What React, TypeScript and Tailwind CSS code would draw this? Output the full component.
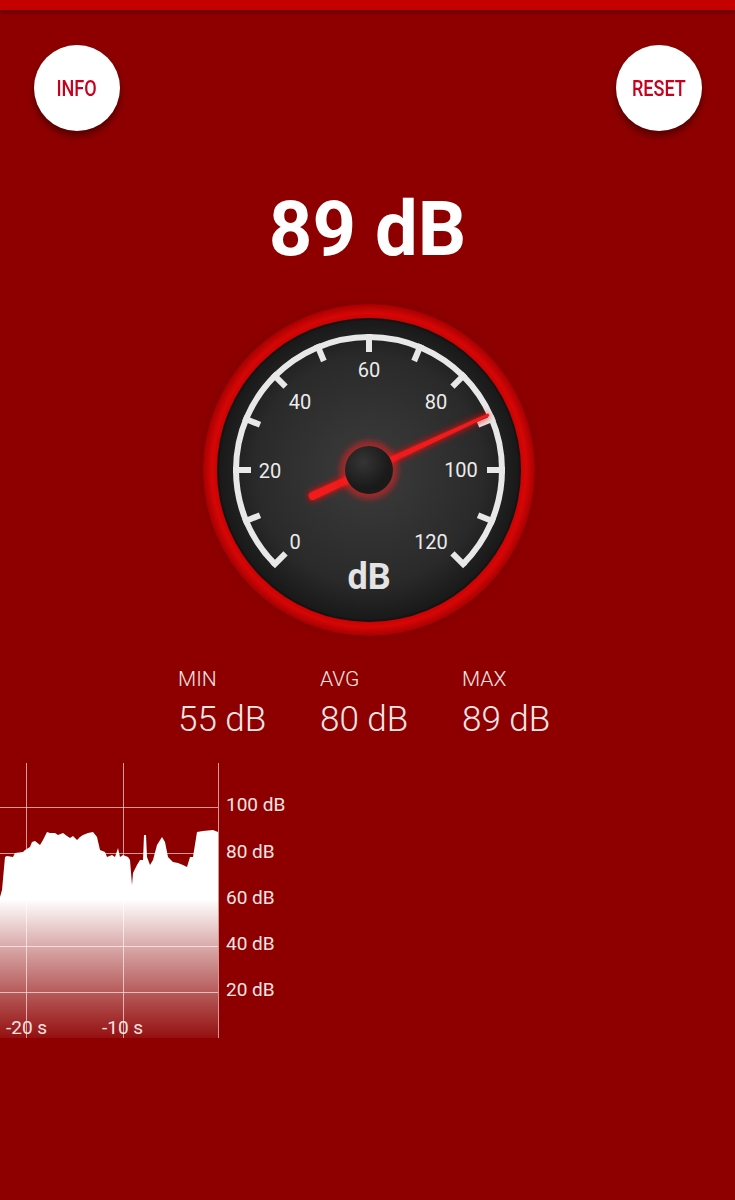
import React from 'react';

const CX = 368;
const CY = 470;

const pt = (deg: number, r: number) => {
    const a = (deg * Math.PI) / 180;
    return { x: CX + r * Math.sin(a), y: CY - r * Math.cos(a) };
};

// label centres, read off the dial
const labels: [number, number, number][] = [
    [0, 294, 542], [20, 269, 471], [40, 299, 402], [60, 368, 370], [80, 435, 402], [100, 460, 470], [120, 430, 542],
];

// chart trace in page coordinates (x, y)
const trace: [number, number][] = [
    [0, 897], [2, 890], [5, 857], [7, 856], [13, 857], [15, 853], [23, 852], [25, 850], [30, 847],
    [32, 842], [35, 841], [40, 845], [43, 840], [47, 832], [50, 833], [55, 833], [58, 835], [63, 833],
    [67, 836], [70, 838], [73, 836], [77, 840], [80, 837], [83, 835], [88, 833], [93, 832], [97, 837],
    [100, 850], [105, 852], [107, 857], [112, 855], [115, 857], [118, 848], [120, 857], [123, 855],
    [128, 857], [130, 860], [132, 885], [133, 873], [137, 865], [140, 860], [143, 860], [144, 835],
    [146, 835], [147, 857], [150, 865], [153, 860], [157, 845], [162, 837], [165, 842], [168, 857],
    [173, 862], [178, 863], [183, 865], [187, 867], [190, 857], [193, 857], [197, 832], [203, 831],
    [213, 830], [218, 832],
];

const RoundButton: React.FC<{ label: string }> = ({ label }) => (
    <button className="flex h-[86px] w-[86px] items-center justify-center rounded-full bg-white shadow-[0_5px_7px_rgba(0,0,0,0.4)]">
        <span className="inline-block scale-x-[0.82] text-[22px] font-medium text-[#c8001e]">{label}</span>
    </button>
);

const Gauge: React.FC<{ value: number }> = ({ value }) => {
    const needle = -135 + value * 2.25;
    const s = pt(-135, 133);
    const e = pt(135, 133);
    return (
        <svg width="340" height="340" viewBox="198 300 340 340" className="block">
            <defs>
                <radialGradient id="face" cx="368" cy="470" r="152" gradientUnits="userSpaceOnUse">
                    <stop offset="0" stopColor="#3c3c3c" />
                    <stop offset="0.75" stopColor="#2a2a2a" />
                    <stop offset="1" stopColor="#181818" />
                </radialGradient>
                <radialGradient id="ring" cx="368" cy="470" r="167" gradientUnits="userSpaceOnUse">
                    <stop offset="0.88" stopColor="#b80000" />
                    <stop offset="0.94" stopColor="#d60606" />
                    <stop offset="1" stopColor="#a00000" />
                </radialGradient>
                <radialGradient id="cap" cx="362" cy="462" r="26" gradientUnits="userSpaceOnUse">
                    <stop offset="0" stopColor="#353535" />
                    <stop offset="1" stopColor="#1a1a1a" />
                </radialGradient>
                <filter id="glow" x="-50%" y="-50%" width="200%" height="200%">
                    <feGaussianBlur stdDeviation="3" />
                </filter>
            </defs>
            <circle cx={CX} cy={CY} r="169" fill="#7a0000" opacity="0.5" filter="url(#glow)" />
            <circle cx={CX} cy={CY} r="166" fill="url(#ring)" />
            <circle cx={CX} cy={CY} r="152" fill="#141414" />
            <circle cx={CX} cy={CY} r="150" fill="url(#face)" />

            <path d={`M ${s.x} ${s.y} A 133 133 0 1 1 ${e.x} ${e.y}`} fill="none" stroke="#e8e8e8" strokeWidth="6" />
            {Array.from({ length: 13 }, (_, i) => {
                const a = -135 + i * 22.5;
                const p1 = pt(a, 136);
                const p2 = pt(a, 118);
                return <line key={i} x1={p1.x} y1={p1.y} x2={p2.x} y2={p2.y} stroke="#e8e8e8" strokeWidth="6" />;
            })}
            {labels.map(([v, x, y]) => (
                <text key={v} x={x} y={y} fill="#ececec" fontSize="20" fontFamily="Roboto, sans-serif" textAnchor="middle" dominantBaseline="central">
                    {v}
                </text>
            ))}
            <text x={CX} y={577} fill="#e4e4e4" fontSize="36" fontWeight="bold" fontFamily="Roboto, sans-serif" textAnchor="middle" dominantBaseline="central">
                dB
            </text>

            <g transform={`rotate(${needle} ${CX} ${CY})`}>
                <path d="M 365.5 338 L 370.5 338 L 373 532 A 5 5 0 0 1 363 532 Z" fill="#ff1010" filter="url(#glow)" opacity="0.8" />
                <path d="M 366.5 338 L 369.5 338 L 372 532 A 4 4 0 0 1 364 532 Z" fill="#f21a1a" />
            </g>
            <circle cx={CX} cy={CY} r="29" fill="#ff1a1a" opacity="0.55" filter="url(#glow)" />
            <circle cx={CX} cy={CY} r="24" fill="url(#cap)" />
        </svg>
    );
};

const Chart: React.FC = () => {
    const area = `M 0 1038 L ${trace.map(([x, y]) => `${x} ${y}`).join(' L ')} L 218 1038 Z`;
    const hLines = [807, 853, 900, 946, 992];
    const yLabels: [string, number][] = [['100 dB', 804], ['80 dB', 851], ['60 dB', 897], ['40 dB', 943], ['20 dB', 989]];
    return (
        <svg width="300" height="290" viewBox="0 760 300 290" className="block">
            <defs>
                <linearGradient id="fill" x1="0" y1="830" x2="0" y2="1040" gradientUnits="userSpaceOnUse">
                    <stop offset="0" stopColor="#ffffff" stopOpacity="1" />
                    <stop offset="0.33" stopColor="#ffffff" stopOpacity="1" />
                    <stop offset="0.6" stopColor="#ffffff" stopOpacity="0.6" />
                    <stop offset="0.8" stopColor="#ffffff" stopOpacity="0.32" />
                    <stop offset="1" stopColor="#ffffff" stopOpacity="0.05" />
                </linearGradient>
            </defs>
            <path d={area} fill="url(#fill)" />
            {hLines.map(y => (
                <line key={y} x1="0" y1={y + 0.5} x2="218" y2={y + 0.5} stroke="#ffffff" strokeOpacity="0.6" strokeWidth="1" />
            ))}
            {[26, 123, 218].map(x => (
                <line key={x} x1={x + 0.5} y1="763" x2={x + 0.5} y2="1038" stroke="#ffffff" strokeOpacity="0.6" strokeWidth="1" />
            ))}
            {yLabels.map(([t, y]) => (
                <text key={t} x="226" y={y} fill="#f5e4e4" fontSize="19" fontFamily="Roboto, sans-serif" dominantBaseline="central">
                    {t}
                </text>
            ))}
            <text x="6" y="1027" fill="#f5e4e4" fontSize="19" fontFamily="Roboto, sans-serif" dominantBaseline="central">-20 s</text>
            <text x="102" y="1027" fill="#f5e4e4" fontSize="19" fontFamily="Roboto, sans-serif" dominantBaseline="central">-10 s</text>
        </svg>
    );
};

export default function App() {
    const stats = [
        { label: 'MIN', value: '55 dB' },
        { label: 'AVG', value: '80 dB' },
        { label: 'MAX', value: '89 dB' },
    ];
    return (
        <div className="flex h-[1200px] w-full flex-col overflow-hidden bg-[#8e0000] font-['Roboto',sans-serif]">
            <div className="h-[10px] w-full bg-[#c40000] shadow-[0_2px_4px_rgba(60,0,0,0.6)]" />

            <div className="mt-[35px] flex justify-between pl-[34px] pr-[33px]">
                <RoundButton label="INFO" />
                <RoundButton label="RESET" />
            </div>

            <h1 className="mt-[60px] text-center text-[76px] font-bold leading-none text-white">89 dB</h1>

            <div className="mt-[33px] flex justify-center pl-[2px]">
                <Gauge value={89} />
            </div>

            <div className="mt-[29px] flex pl-[178px]">
                {stats.map(s => (
                    <div key={s.label} className="flex w-[142px] flex-col">
                        <span className="text-[21px] font-light leading-none text-[#f5e6e6]">{s.label}</span>
                        <span className="mt-[12px] text-[35px] font-light leading-none text-[#f5e6e6]">{s.value}</span>
                    </div>
                ))}
            </div>

            <div className="mt-[23px]">
                <Chart />
            </div>
        </div>
    );
}
